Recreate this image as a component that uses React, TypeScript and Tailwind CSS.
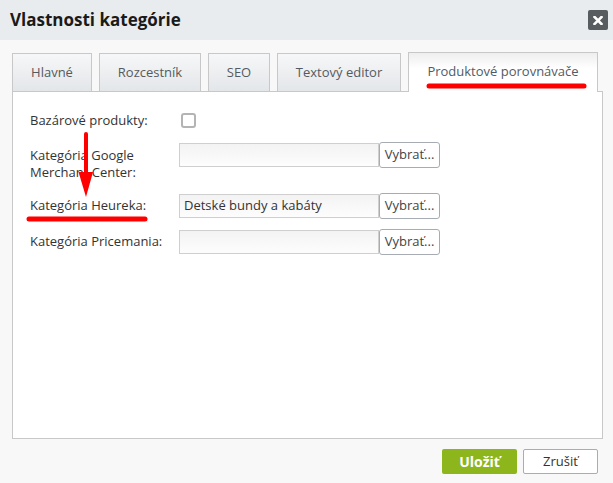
import React from "react";

const font = { fontFamily: '"Open Sans", "Noto Sans", sans-serif' };

function Tab({ label, w, active }: { label: string; w: number; active?: boolean }) {
  if (active) {
    return (
      <div
        className="relative z-10 h-[40px] mb-[-1px] flex items-center justify-center border border-b-0 border-[#c8c8c8] bg-gradient-to-b from-[#eeeeee] to-white to-[40%] text-[13px] text-[#4f5b66] pb-[2px]"
        style={{ width: w }}
      >
        {label}
      </div>
    );
  }
  return (
    <div
      className="h-[38px] flex items-center justify-center border border-b-0 border-[#c8c8c8] bg-gradient-to-b from-[#f6f7f8] to-[#e3e6e9] text-[13px] text-[#555a60]"
      style={{ width: w }}
    >
      {label}
    </div>
  );
}

function PickRow({ value }: { value?: string }) {
  return (
    <div className="flex items-center">
      <div className="w-[200px] h-[24px] border border-[#cfcfcf] bg-gradient-to-b from-[#f3f3f3] to-[#fdfdfd] flex items-center px-[4px] text-[13px] text-[#333]">
        {value}
      </div>
      <div className="w-[61px] h-[26px] border border-[#a7acb4] rounded-[3px] bg-white flex items-center justify-center text-[13px] text-[#444]">
        Vybrať...
      </div>
    </div>
  );
}

export default function App() {
  return (
    <div className="relative w-[613px] h-[483px] bg-[#f8f8f8] flex flex-col overflow-hidden" style={font}>
      <div className="h-[40px] bg-[#e9ecef] flex items-center justify-between pl-[10px] pr-[5px] shrink-0">
        <div className="text-[17px] font-bold text-[#1a1a1a] leading-none pb-[2px]">Vlastnosti kategórie</div>
        <div className="w-[20px] h-[20px] bg-[#575c61] rounded-[2px] flex items-center justify-center">
          <svg width="10" height="9" viewBox="0 0 10 9">
            <path d="M1.5 1 L8.5 8 M8.5 1 L1.5 8" stroke="white" strokeWidth="2.6" strokeLinecap="square" />
          </svg>
        </div>
      </div>

      <div className="pl-[12px] pr-[10px] pt-[12px]">
        <div className="flex items-end gap-[7px]">
          <Tab label="Hlavné" w={80} />
          <Tab label="Rozcestník" w={102} />
          <Tab label="SEO" w={62} />
          <Tab label="Textový editor" w={124} />
          <Tab label="Produktové porovnávače" w={190} active />
        </div>
        <div className="h-[348px] border border-[#c8c8c8] bg-white pl-[17px] text-[13px] text-[#333]">
          <div className="flex items-center h-[18px] mt-[19px]">
            <div className="w-[149px] leading-[18px]">Bazárové produkty:</div>
            <div className="ml-[2px] w-[15px] h-[15px] border-2 border-[#b4b4b4] rounded-[3px] bg-white" />
          </div>
          <div className="flex items-start h-[41px] mt-[13px]">
            <div className="w-[149px] leading-[17px] pt-[5px] pr-[10px]">Kategória Google Merchant Center:</div>
            <PickRow />
          </div>
          <div className="flex items-center h-[26px] mt-[10px]">
            <div className="w-[149px]">Kategória Heureka:</div>
            <PickRow value="Detské bundy a kabáty" />
          </div>
          <div className="flex items-center h-[26px] mt-[10px]">
            <div className="w-[149px]">Kategória Pricemania:</div>
            <PickRow />
          </div>
        </div>
        <div className="flex justify-end gap-[6px] mt-[10px] pr-[5px]">
          <div className="w-[75px] h-[25px] bg-[#8db61d] rounded-[2px] flex items-center justify-center text-[14px] font-bold text-white">
            Uložiť
          </div>
          <div className="w-[75px] h-[25px] bg-white border border-[#a8adb3] rounded-[2px] flex items-center justify-center text-[13px] text-[#333]">
            Zrušiť
          </div>
        </div>
      </div>

      <svg className="absolute left-0 top-0 z-20 pointer-events-none" width="613" height="483" viewBox="0 0 613 483">
        <line x1="429" y1="86" x2="584" y2="86" stroke="#ff0000" strokeWidth="5" strokeLinecap="round" />
        <line x1="29" y1="219" x2="145" y2="219" stroke="#ff0000" strokeWidth="5" strokeLinecap="round" />
        <line x1="86" y1="134" x2="86" y2="176" stroke="#ff0000" strokeWidth="4" strokeLinecap="round" />
        <polygon points="78.5,172 93,172 86,197" fill="#ff0000" />
      </svg>
    </div>
  );
}
